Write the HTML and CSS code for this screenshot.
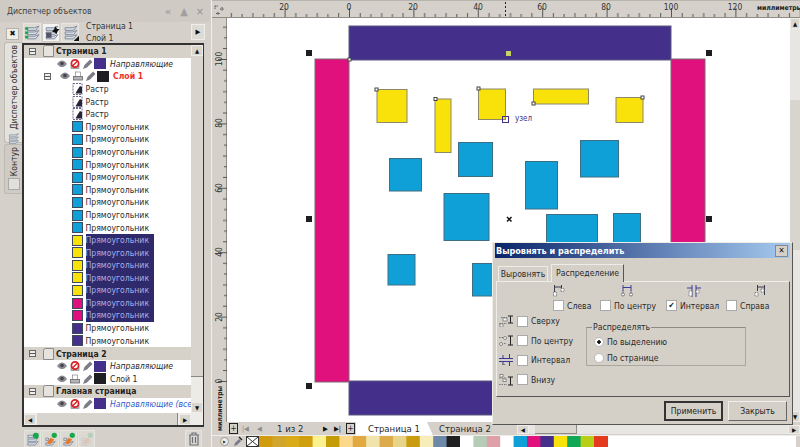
FILE: index.html
```html
<!DOCTYPE html>
<html lang="ru">
  <head>
    <meta charset="UTF-8" />
    <meta name="viewport" content="width=device-width, initial-scale=1.0" />
    <title>Диспетчер объектов</title>
    <link rel="stylesheet" href="styles.css">
  </head>
  <body>
    <!-- shared icons -->
    <svg class="defs" width="0" height="0">
      <symbol id="i-eye" viewBox="0 0 10 8"><path d="M0 4C2 1 3.500 .5 5 .5S8 1 10 4C8 6.500 6.500 7 5 7S2 6.500 0 4Z" fill="#8a8a92"/><circle cx="5" cy="3.500" r="1.800" fill="#44444c"/></symbol>
      <symbol id="i-noprint" viewBox="0 0 10 10"><rect x="1" y="6" width="8" height="3.500" fill="#bbb" stroke="#777" stroke-width=".6"/><circle cx="5" cy="4.500" r="3.600" fill="#fff" stroke="#d8232a" stroke-width="1.800"/><path d="M2.500 7L7.500 2" stroke="#d8232a" stroke-width="1.500"/></symbol>
      <symbol id="i-print" viewBox="0 0 10 10"><rect x="2.500" y="1" width="5" height="5" fill="#fff" stroke="#888" stroke-width=".7"/><rect x=".5" y="5.500" width="9" height="3.500" fill="#b4b4bc" stroke="#666" stroke-width=".8"/></symbol>
      <symbol id="i-pencil" viewBox="0 0 10 10"><path d="M0 10L1.500 6 7 .5 9.500 3 4 8.500Z" fill="#7c7c86"/></symbol>
      <symbol id="i-page" viewBox="0 0 12 12"><path d="M1.500 2.500Q1.500 .5 3.500 .5H11.500V11.500H1.500Z" fill="#e6e3de" stroke="#8a8a8a"/></symbol>
      <symbol id="i-bitmap" viewBox="0 0 11 12"><rect x="1" y=".5" width="9" height="11" fill="#fff" stroke="#6a6a8a" stroke-dasharray="2 1"/><path d="M3.500 10.500L6 6 8 3 10 4V10.500Z" fill="#24243a"/></symbol>
      <symbol id="i-stack" viewBox="0 0 16 16"><path d="M3 3.500H10L14 2 11 6H3ZM3 7.500H10L14 6 11 10H3ZM3 11.500H10L14 10 11 14H3Z" fill="#d6dce4" stroke="#66748c" stroke-width=".7"/></symbol>
      <symbol id="i-stack-green" viewBox="0 0 16 16"><use href="#i-stack"/><rect x="1" y="3" width="3" height="2.500" fill="#1fa84a"/><rect x="1" y="7" width="3" height="2.500" fill="#1fa84a"/><rect x="1" y="11" width="3" height="2.500" fill="#1fa84a"/></symbol>
      <symbol id="i-stack-dot" viewBox="0 0 16 16"><use href="#i-stack"/><path d="M11.500 2L13 4.500 15.500 5 13.500 7 13 9.500 11 8 8.500 7 10.500 5Z" fill="#111"/><rect x="3" y="8" width="5" height="5" fill="#556" /></symbol>
      <symbol id="i-stack-corner" viewBox="0 0 16 16"><use href="#i-stack"/><path d="M16 11V16H11Z" fill="#111"/></symbol>
      <symbol id="i-new-green" viewBox="0 0 16 16"><use href="#i-stack"/><circle cx="11.500" cy="4" r="3.200" fill="#17a84b"/></symbol>
      <symbol id="i-new-mix" viewBox="0 0 16 16"><path d="M3 11.500H9L13 10 10 14H3ZM3 6.500H6V9H3Z" fill="#d6dce4" stroke="#66748c" stroke-width=".7"/><circle cx="12" cy="3.500" r="2.800" fill="#17a84b"/><path d="M4 12L8 6 12 8 8 13Z" fill="#e8792a"/></symbol>
      <symbol id="i-dist-a" viewBox="0 0 14 12"><path d="M1.500 0V7M8.500 0V7M2 2H8" stroke="#3a3a50" fill="none"/><rect x=".5" y="7" width="3" height="4" fill="#fff" stroke="#777" stroke-dasharray="1 .6"/><rect x="8" y="3.500" width="3" height="3" fill="#fff" stroke="#777" stroke-dasharray="1 .6"/></symbol>
      <symbol id="i-dist-b" viewBox="0 0 14 12"><path d="M3 0V6M11 0V6M3 2.500H11" stroke="#3a3a9a" fill="none"/><path d="M3 6V8M11 6V8" stroke="#777"/><circle cx="3" cy="9.500" r="1.500" fill="#fff" stroke="#777"/><circle cx="11" cy="9.500" r="1.500" fill="#fff" stroke="#777"/></symbol>
      <symbol id="i-dist-c" viewBox="0 0 14 12"><path d="M5 0V12M9 0V12M0 3H5M9 3H14" stroke="#3a3a9a" fill="none"/><rect x="2" y="6" width="3" height="5" fill="#fff" stroke="#777" stroke-dasharray="1 .6"/><rect x="9" y="5" width="3" height="3" fill="#fff" stroke="#777" stroke-dasharray="1 .6"/></symbol>
      <symbol id="i-dist-d" viewBox="0 0 14 12"><path d="M5.500 0V6M12.500 0V10M6 2H12" stroke="#3a3a50" fill="none"/><rect x="3" y="7.500" width="3" height="3.500" fill="#fff" stroke="#777" stroke-dasharray="1 .6"/><rect x="9" y="4" width="3" height="3" fill="#fff" stroke="#777" stroke-dasharray="1 .6"/></symbol>
      <symbol id="i-vdist-a" viewBox="0 0 14 12"><path d="M2 2.500H8M0 8.500H8" stroke="#777" stroke-dasharray="1.500 1" fill="none"/><rect x="4" y="3" width="4" height="3" fill="#fff" stroke="#888"/><rect x="1" y="9" width="3" height="3" fill="#fff" stroke="#888"/><path d="M9 1H14M11.500 1V8M9 8H14" stroke="#222" fill="none"/></symbol>
      <symbol id="i-vdist-b" viewBox="0 0 14 12"><path d="M0 2.500H7M0 8.500H7" stroke="#777" stroke-dasharray="1.500 1" fill="none"/><circle cx="6" cy="3" r="1.500" fill="#fff" stroke="#888"/><circle cx="2" cy="9" r="1.500" fill="#fff" stroke="#888"/><path d="M9 1H14M11.500 1V10M9 10H14" stroke="#222" fill="none"/></symbol>
      <symbol id="i-vdist-c" viewBox="0 0 14 12"><path d="M0 4.500H14M0 7.500H14" stroke="#3a3a9a" fill="none"/><path d="M10.500 0V4M10.500 8V12M4 1V4M4 8V11" stroke="#3a3a9a"/><path d="M3 10.500H6" stroke="#777"/></symbol>
      <symbol id="i-vdist-d" viewBox="0 0 14 12"><rect x="1" y=".5" width="3" height="2.500" fill="#fff" stroke="#888"/><rect x="4" y="5" width="3" height="2.500" fill="#fff" stroke="#888"/><path d="M0 4H7M0 10.500H8" stroke="#777" stroke-dasharray="1.500 1" fill="none"/><path d="M9 3H14M11.500 3V11M9 11H14" stroke="#222" fill="none"/></symbol>
    </svg>

    <aside class="docker">
      <header class="docker-title">
        <span class="docker-name">Диспетчер объектов</span>
        <span class="docker-btns"><b>«</b><b>▲</b><b>×</b></span>
      </header>
      <div class="docker-body">
        <nav class="side-tabs">
          <span class="side-close">✖</span>
          <div class="side-tab side-tab-on">
            <span class="side-text">Диспетчер объектов</span>
            <svg class="side-icon" width="13" height="13"><use href="#i-stack"/></svg>
          </div>
          <div class="side-tab">
            <span class="side-text">Контур</span>
            <span class="side-mini"></span>
          </div>
        </nav>
        <div class="docker-main">
          <div class="tools">
            <span class="tool"><svg width="17" height="17"><use href="#i-stack-green"/></svg></span>
            <span class="tool tool-on"><svg width="17" height="17"><use href="#i-stack-dot"/></svg></span>
            <span class="tool"><svg width="17" height="17"><use href="#i-stack-corner"/></svg></span>
            <div class="tools-text">Страница 1<br>Слой 1</div>
            <span class="tool-arrow">▶</span>
          </div>
          <div class="tree">
            <div class="tree-top">
              <div class="tree-rows">
                <div class="row row-page"><i class="box"></i><svg class="pg" width="12" height="12"><use href="#i-page"/></svg>Страница 1</div>
                <div class="row row-layer"><svg width="10" height="8"><use href="#i-eye"/></svg><svg width="10" height="10"><use href="#i-noprint"/></svg><svg width="10" height="10"><use href="#i-pencil"/></svg><i class="lay c-purple"></i><em>Направляющие</em></div>
                <div class="row row-layer row-active"><i class="box"></i><svg width="10" height="8"><use href="#i-eye"/></svg><svg width="10" height="10"><use href="#i-print"/></svg><svg width="10" height="10"><use href="#i-pencil"/></svg><i class="lay c-black"></i><strong>Слой 1</strong></div>
                <div class="row row-obj"><svg class="bmp" width="11" height="12"><use href="#i-bitmap"/></svg><span>Растр</span></div>
                <div class="row row-obj"><svg class="bmp" width="11" height="12"><use href="#i-bitmap"/></svg><span>Растр</span></div>
                <div class="row row-obj"><svg class="bmp" width="11" height="12"><use href="#i-bitmap"/></svg><span>Растр</span></div>
                <div class="row row-obj"><i class="sw c-blue"></i><span>Прямоугольник</span></div>
                <div class="row row-obj"><i class="sw c-blue"></i><span>Прямоугольник</span></div>
                <div class="row row-obj"><i class="sw c-blue"></i><span>Прямоугольник</span></div>
                <div class="row row-obj"><i class="sw c-blue"></i><span>Прямоугольник</span></div>
                <div class="row row-obj"><i class="sw c-blue"></i><span>Прямоугольник</span></div>
                <div class="row row-obj"><i class="sw c-blue"></i><span>Прямоугольник</span></div>
                <div class="row row-obj"><i class="sw c-blue"></i><span>Прямоугольник</span></div>
                <div class="row row-obj"><i class="sw c-blue"></i><span>Прямоугольник</span></div>
                <div class="row row-obj"><i class="sw c-blue"></i><span>Прямоугольник</span></div>
                <div class="row row-obj row-sel"><i class="sw c-yellow"></i><span>Прямоугольник</span></div>
                <div class="row row-obj row-sel"><i class="sw c-yellow"></i><span>Прямоугольник</span></div>
                <div class="row row-obj row-sel"><i class="sw c-yellow"></i><span>Прямоугольник</span></div>
                <div class="row row-obj row-sel"><i class="sw c-yellow"></i><span>Прямоугольник</span></div>
                <div class="row row-obj row-sel"><i class="sw c-yellow"></i><span>Прямоугольник</span></div>
                <div class="row row-obj row-sel"><i class="sw c-pink"></i><span>Прямоугольник</span></div>
                <div class="row row-obj row-sel"><i class="sw c-pink"></i><span>Прямоугольник</span></div>
                <div class="row row-obj"><i class="sw c-purple"></i><span>Прямоугольник</span></div>
                <div class="row row-obj"><i class="sw c-purple"></i><span>Прямоугольник</span></div>
                <div class="row row-page"><i class="box"></i><svg class="pg" width="12" height="12"><use href="#i-page"/></svg>Страница 2</div>
                <div class="row row-layer"><svg width="10" height="8"><use href="#i-eye"/></svg><svg width="10" height="10"><use href="#i-noprint"/></svg><svg width="10" height="10"><use href="#i-pencil"/></svg><i class="lay c-purple"></i><em>Направляющие</em></div>
                <div class="row row-layer"><svg width="10" height="8"><use href="#i-eye"/></svg><svg width="10" height="10"><use href="#i-print"/></svg><svg width="10" height="10"><use href="#i-pencil"/></svg><i class="lay c-black"></i><span>Слой 1</span></div>
                <div class="row row-page"><i class="box"></i><svg class="pg" width="12" height="12"><use href="#i-page"/></svg>Главная страница</div>
                <div class="row row-layer row-master"><svg width="10" height="8"><use href="#i-eye"/></svg><svg width="10" height="10"><use href="#i-noprint"/></svg><svg width="10" height="10"><use href="#i-pencil"/></svg><i class="lay c-purple"></i><em>Направляющие (все</em></div>
              </div>
              <div class="vscroll">
                <span class="sbtn">▲</span>
                <span class="vthumb"></span>
                <span class="vtrack"></span>
                <span class="sbtn">▼</span>
              </div>
            </div>
            <div class="hscroll">
              <span class="sbtn">◀</span>
              <span class="hthumb"></span>
              <span class="sbtn">▶</span>
            </div>
          </div>
          <div class="docker-foot">
            <span class="foot-btn"><svg width="15" height="15"><use href="#i-new-green"/></svg></span>
            <span class="foot-btn"><svg width="15" height="15"><use href="#i-new-mix"/></svg></span>
            <span class="foot-btn"><svg width="15" height="15"><use href="#i-new-mix"/></svg></span>
            <span class="foot-btn foot-off"><svg width="15" height="15"><use href="#i-new-mix"/></svg></span>
            <span class="foot-btn foot-trash"><svg width="12" height="14" viewBox="0 0 12 14"><path d="M1 3H11M4 3V1H8V3M2 3.500V13H10V3.500M4.500 5V11M7.500 5V11" fill="none" stroke="#6f6f78" stroke-width="1.200"/></svg></span>
          </div>
        </div>
      </div>
    </aside>

    <main class="workspace">
      <div class="ruler-top">
        <span class="corner"><svg width="11" height="11" viewBox="0 0 11 11"><path d="M1 1H4M1 1V4M6 4H10M8 2V6M4 7V10M2 8.500H6" stroke="#555" fill="none" stroke-dasharray="1.500 .7"/></svg></span>
        <svg class="ruler-h" width="573" height="17" viewBox="227 0 573 17">
          <defs>
            <pattern id="tick-h" x="349" y="0" width="64.4" height="17" patternUnits="userSpaceOnUse">
              <path d="M.5 8V17M11.200 13V17M21.900 14V17M32.700 13V17M43.400 14V17M54.100 13V17" stroke="#555" fill="none"/>
            </pattern>
          </defs>
          <rect x="227" width="573" height="17" fill="url(#tick-h)"/>
          <path d="M505.500 2V17" stroke="#222" stroke-dasharray="2 2"/>
          <g class="ruler-num" text-anchor="middle">
            <text x="284" y="10">20</text><text x="349" y="10">0</text><text x="413" y="10">20</text><text x="478" y="10">40</text><text x="542" y="10">60</text><text x="606" y="10">80</text><text x="671" y="10">100</text><text x="735" y="10">120</text>
          </g>
          <text class="ruler-unit" x="757" y="10">миллиметры</text>
        </svg>
      </div>
      <div class="mid">
        <div class="ruler-left">
          <svg width="15" height="415" viewBox="212 18 15 415">
            <defs>
              <pattern id="tick-v" x="212" y="59" width="15" height="64.4" patternUnits="userSpaceOnUse">
                <path d="M6 .5H15M11 11.200H15M12 21.900H15M11 32.700H15M12 43.400H15M11 54.100H15" stroke="#555" fill="none"/>
              </pattern>
            </defs>
            <rect x="212" y="18" width="15" height="368" fill="url(#tick-v)"/>
            <g class="ruler-num" text-anchor="middle">
              <text transform="translate(222 59) rotate(-90)">100</text>
              <text transform="translate(222 123) rotate(-90)">80</text>
              <text transform="translate(222 188) rotate(-90)">60</text>
              <text transform="translate(222 252) rotate(-90)">40</text>
              <text transform="translate(222 317) rotate(-90)">20</text>
              <text transform="translate(222 381) rotate(-90)">0</text>
            </g>
            <text class="ruler-unit" transform="translate(222 431) rotate(-90)">миллиметры</text>
          </svg>
        </div>
        <svg class="canvas" width="563" height="404" viewBox="227 18 563 404">
          <g class="shapes-purple"><rect x="349" y="26" width="322" height="34"/><rect x="349" y="381" width="322" height="34"/></g>
          <g class="shapes-pink"><rect x="315" y="59" width="34" height="323"/><rect x="671" y="59" width="34" height="323"/></g>
          <g class="shapes-yellow">
            <rect x="377" y="89.500" width="30" height="33"/>
            <rect x="435" y="99" width="16" height="53.500"/>
            <rect x="478.500" y="89" width="27" height="30.500"/>
            <rect x="533.500" y="89" width="55" height="15"/>
            <rect x="616" y="97.500" width="27" height="25"/>
          </g>
          <g class="shapes-blue">
            <rect x="389.500" y="158.500" width="32" height="32.500"/>
            <rect x="458.500" y="142.500" width="34" height="34"/>
            <rect x="444" y="193.500" width="45" height="47"/>
            <rect x="388" y="254.500" width="27" height="30.500"/>
            <rect x="472.500" y="263.500" width="20" height="32.500"/>
            <rect x="525.500" y="161.500" width="32" height="47.500"/>
            <rect x="580.500" y="140.500" width="38" height="36.500"/>
            <rect x="546.500" y="214.500" width="51" height="29"/>
            <rect x="613.500" y="213.500" width="27" height="30"/>
          </g>
          <g class="handles">
            <rect x="306" y="50" width="6" height="6"/><rect x="706" y="50" width="6" height="6"/>
            <rect x="306" y="216" width="6" height="6"/><rect x="706" y="216" width="6" height="6"/>
            <rect x="306" y="383" width="6" height="6"/>
          </g>
          <rect class="handle-mid" x="506" y="51" width="5" height="5"/>
          <path class="center-x" d="M507 217L511.500 221.500M511.500 217L507 221.500"/>
          <g class="nodes">
            <rect x="375" y="88" width="3" height="3"/><rect x="434" y="97.500" width="3" height="3"/>
            <rect x="477" y="87" width="3" height="3"/><rect x="532" y="102" width="3" height="3"/>
            <rect x="641" y="96" width="3" height="3"/><rect x="348" y="58" width="3" height="3"/>
          </g>
          <rect class="snap" x="502.500" y="116.500" width="6" height="6"/>
          <text class="snap-text" x="515" y="121">узел</text>
        </svg>
        <div class="canvas-scroll">
          <span class="sbtn">▲</span>
          <span class="cs-track"></span>
          <span class="cs-thumb"></span>
          <span class="cs-rest"></span>
          <span class="sbtn">▼</span>
        </div>
      </div>
      <div class="pagebar">
        <span class="pg-add">+</span>
        <span class="pg-nav pg-first pg-off">|◀</span>
        <span class="pg-nav pg-prev pg-off">◀</span>
        <span class="pg-count">1 из 2</span>
        <span class="pg-nav pg-next">▶</span>
        <span class="pg-nav pg-last">▶|</span>
        <span class="pg-add">+</span>
        <span class="pg-tab pg-tab-on">Страница 1</span>
        <span class="pg-tab">Страница 2</span>
        <div class="pg-scroll">
          <span class="sbtn">◀</span>
          <span class="pg-thumb"></span>
          <span class="pg-track"></span>
          <span class="sbtn">▶</span>
        </div>
      </div>
      <div class="palette">
        <span class="pal-arrow">▶</span>
        <svg class="pal-drop" width="10" height="11" viewBox="0 0 10 11"><path d="M1 10L2 7 6 3 8 5 4 9Z" fill="#7a7a8a"/><path d="M5.500 1.500L6.500 .5 9.500 3.500 8.500 4.500Z" fill="#222"/></svg>
        <svg class="pal-none" width="13" height="11"><rect x=".5" y=".5" width="12" height="10" fill="#fff" stroke="#333"/><path d="M1 1L12 10M12 1L1 10" stroke="#333"/></svg>
        <svg class="pal-colors" width="349" height="11" viewBox="0 0 349 11">
          <rect x="0" width="14" height="11" fill="#d09c0e"/><rect x="13.400" width="14" height="11" fill="#d2a62c"/><rect x="26.800" width="14" height="11" fill="#d9ab18"/><rect x="40.200" width="14" height="11" fill="#cf9f0e"/><rect x="53.600" width="14" height="11" fill="#fdf08e"/><rect x="67" width="14" height="11" fill="#c49c08"/><rect x="80.400" width="14" height="11" fill="#fbd88a"/><rect x="93.800" width="14" height="11" fill="#e0aa40"/><rect x="107.200" width="14" height="11" fill="#f0e3ac"/><rect x="120.600" width="14" height="11" fill="#dcac4c"/><rect x="134" width="14" height="11" fill="#e8d488"/><rect x="147.400" width="14" height="11" fill="#c99c10"/><rect x="160.800" width="14" height="11" fill="#f7edb8"/><rect x="174.200" width="14" height="11" fill="#6e88a8"/><rect x="187.600" width="14" height="11" fill="#1f1f22"/><rect x="201" width="14" height="11" fill="#fff"/><rect x="214.400" width="14" height="11" fill="#b4ccb8"/><rect x="227.800" width="14" height="11" fill="#dfa0a8"/><rect x="241.200" width="14" height="11" fill="#fff"/><rect x="254.600" width="14" height="11" fill="#10a0d8"/><rect x="268" width="14" height="11" fill="#e0107c"/><rect x="281.400" width="14" height="11" fill="#44308a"/><rect x="294.800" width="14" height="11" fill="#f9e20a"/><rect x="308.200" width="14" height="11" fill="#10a855"/><rect x="321.600" width="14" height="11" fill="#b8cf18"/><rect x="335" width="14" height="11" fill="#e63a20"/>
        </svg>
        <span class="pal-rest"></span>
      </div>
    </main>

    <section class="dialog">
      <header class="dlg-title">Выровнять и распределить<span class="dlg-close">✕</span></header>
      <div class="dlg-tabs">
        <span class="dlg-tab">Выровнять</span>
        <span class="dlg-tab dlg-tab-on">Распределение</span>
      </div>
      <div class="dlg-panel">
        <div class="h-opts">
          <div class="h-opt h-opt-1"><svg width="14" height="12"><use href="#i-dist-a"/></svg><label><i class="chk"></i>Слева</label></div>
          <div class="h-opt h-opt-2"><svg width="14" height="12"><use href="#i-dist-b"/></svg><label><i class="chk"></i>По центру</label></div>
          <div class="h-opt h-opt-3"><svg width="14" height="12"><use href="#i-dist-c"/></svg><label><i class="chk">✔</i>Интервал</label></div>
          <div class="h-opt h-opt-4"><svg width="14" height="12"><use href="#i-dist-d"/></svg><label><i class="chk"></i>Справа</label></div>
        </div>
        <div class="dlg-lower">
          <div class="v-opts">
            <label><svg width="14" height="12"><use href="#i-vdist-a"/></svg><i class="chk"></i>Сверху</label>
            <label><svg width="14" height="12"><use href="#i-vdist-b"/></svg><i class="chk"></i>По центру</label>
            <label><svg width="14" height="12"><use href="#i-vdist-c"/></svg><i class="chk"></i>Интервал</label>
            <label><svg width="14" height="12"><use href="#i-vdist-d"/></svg><i class="chk"></i>Внизу</label>
          </div>
          <fieldset class="dlg-group">
            <legend>Распределять</legend>
            <label><i class="radio radio-on"></i>По выделению</label>
            <label><i class="radio"></i>По странице</label>
          </fieldset>
        </div>
      </div>
      <div class="dlg-btns">
        <button class="dlg-btn dlg-btn-def" type="button">Применить</button>
        <button class="dlg-btn" type="button">Закрыть</button>
      </div>
    </section>
  </body>
</html>
```

FILE: styles.css
```css
* {
  box-sizing: border-box;
}
html, body {
  margin: 0;
  height: 100%;
}
body {
  width: 800px;
  height: 447px;
  overflow: hidden;
  position: relative;
  display: flex;
  background-color: #d5d1ca;
  font-family: "DejaVu Sans Condensed", "DejaVu Sans", sans-serif;
  font-size: 8.6px;
  color: #2a2a2a;
}
.defs {
  position: absolute;
}
svg {
  display: block;
  flex: none;
}
i {
  font-style: normal;
}

/* docker */
.docker {
  width: 212px;
  flex: none;
  display: flex;
  flex-direction: column;
  border-right: 1px solid #f0eeea;
  padding-right: 1px;
}
.docker-title {
  height: 22px;
  display: flex;
  align-items: center;
  justify-content: space-between;
  padding: 0 5px 0 7px;
  background-color: #cfcbc4;
  color: #3c3c3c;
}
.docker-btns {
  display: flex;
  gap: 6px;
  color: #a0a0a0;
}
.docker-btns b {
  width: 10px;
  text-align: center;
  font-size: 11px;
}
.docker-body {
  flex: 1;
  display: flex;
  min-height: 0;
}
.side-tabs {
  width: 22px;
  flex: none;
  padding: 6px 0 0 4px;
  display: flex;
  flex-direction: column;
}
.side-close {
  width: 13px;
  height: 12px;
  margin: 0 0 2px 2px;
  background-color: #efedea;
  border: 1px solid #b5b2aa;
  font-size: 8px;
  line-height: 10px;
  text-align: center;
  color: #111;
}
.side-tab {
  display: flex;
  flex-direction: column;
  align-items: center;
  gap: 2px;
  padding: 2px 0 3px;
  border: 1px solid #bdbab2;
  border-right: 0;
  border-radius: 3px 0 0 3px;
  background-color: #d0ccc5;
  width: 18px;
}
.side-tab-on {
  background-color: #e4e2dc;
  height: 101px;
  margin-bottom: 1px;
}
.side-text {
  writing-mode: vertical-rl;
  transform: rotate(180deg);
  line-height: 14px;
  white-space: nowrap;
}
.side-mini {
  width: 12px;
  height: 12px;
  background-color: #e0dfdc;
  border: 1px solid #aaa;
}
.docker-main {
  flex: 1;
  min-width: 0;
  display: flex;
  flex-direction: column;
  padding-right: 6px;
}
.tools {
  height: 20px;
  display: flex;
  align-items: center;
  gap: 1px;
  margin-right: -1px;
  padding-left: 1px;
}
.tool {
  width: 18px;
  height: 19px;
  display: flex;
  align-items: center;
  justify-content: center;
  background-color: #dedbd5;
  border: 1px solid #e8e6e2;
}
.tool-on {
  background-color: #f4f3f0;
  border-color: #cfcdc8;
}
.tools-text {
  flex: 1;
  padding-left: 6px;
  line-height: 12px;
  color: #333;
}
.tool-arrow {
  width: 14px;
  height: 16px;
  background-color: #dedbd5;
  border: 1px solid #efedea;
  font-size: 7px;
  line-height: 14px;
  text-align: center;
  color: #111;
}
.tree {
  height: 384px;
  margin-top: 1px;
  border: 1px solid #333;
  border-width: 2px 1px 2px 2px;
  display: flex;
  flex-direction: column;
  background-color: #fff;
  flex: none;
}
.tree-top {
  flex: 1;
  min-height: 0;
  display: flex;
}
.tree-rows {
  flex: 1;
  min-width: 0;
  overflow: hidden;
}
.row {
  height: 12.6px;
  display: flex;
  align-items: center;
  white-space: nowrap;
  line-height: 12px;
}
.box {
  width: 7px;
  height: 7px;
  flex: none;
  border: 1px solid #666;
  background: linear-gradient(#555, #555) center / 5px 1px no-repeat #eee;
}
.row-page {
  background-color: #d6d2ca;
  padding-left: 5px;
  font-weight: bold;
  color: #222;
}
.pg {
  margin: 0 2px 0 6px;
}
.row-layer {
  padding-left: 33px;
  gap: 3px;
}
.row-layer em,
.row-layer strong,
.row-layer span {
  margin-left: 1px;
}
.row-active {
  padding-left: 20px;
}
.row-active .box {
  margin-right: 6px;
}
.row-active strong {
  color: #f0302a;
}
.row-master em {
  color: #2f5cc8;
}
.lay {
  width: 12px;
  height: 11px;
  flex: none;
  margin-left: -2px;
}
.c-purple { background-color: #44308a; }
.c-black { background-color: #1e1e22; }
.c-blue { background-color: #10a0d8; }
.c-yellow { background-color: #f9e20a; }
.c-pink { background-color: #e0107c; }
.row-obj {
  padding-left: 48px;
}
.sw {
  width: 11px;
  height: 11px;
  flex: none;
  border: 1px solid #3d4a5c;
}
.row-obj span {
  margin-left: 2.500px;
}
.row-sel span {
  width: 68px;
  background-color: #2e2a6b;
  color: #a9b0e6;
  line-height: 12.6px;
}
.vscroll {
  width: 12px;
  flex: none;
  display: flex;
  flex-direction: column;
  background-color: #eeece8;
}
.sbtn {
  display: block;
  flex: none;
  width: 12px;
  height: 11px;
  background-color: #d9d6d0;
  border: 1px solid #efedea;
  font-size: 6px;
  line-height: 9px;
  text-align: center;
  color: #111;
}
.vthumb {
  height: 321px;
  background-color: #d8d5cf;
  border-bottom: 1px solid #888;
}
.vtrack {
  flex: 1;
  background-color: #ecebe6;
}
.hscroll {
  height: 12px;
  flex: none;
  display: flex;
  align-items: center;
  gap: 1px;
  background-color: #eeece8;
  padding-right: 12px;
}
.hthumb {
  flex: 1;
  height: 12px;
  background-color: #d8d5cf;
  border-right: 1px solid #888;
}
.docker-foot {
  flex: 1;
  display: flex;
  gap: 1px;
  padding-top: 3px;
  padding-left: 2px;
}
.foot-btn {
  width: 17px;
  height: 18px;
  display: flex;
  align-items: center;
  justify-content: center;
  background-color: #dcd9d3;
  border: 1px solid #e6e4df;
}
.foot-off svg {
  opacity: 0.2;
}
.foot-trash {
  margin-left: auto;
  margin-right: 2px;
}

/* workspace */
.workspace {
  flex: 1;
  min-width: 0;
  display: flex;
  flex-direction: column;
}
.ruler-top {
  height: 18px;
  display: flex;
  border-top: 1px solid #b8b5ae;
  border-bottom: 1px solid #8f8c86;
  overflow: hidden;
}
.corner {
  width: 15px;
  flex: none;
  padding: 4px 0 0 2px;
}
.ruler-h {
  margin-top: -1px;
}
.ruler-num {
  font-family: "DejaVu Sans Condensed", "DejaVu Sans", sans-serif;
  font-size: 8.5px;
  fill: #333;
}
.ruler-unit {
  font-family: "DejaVu Sans Condensed", "DejaVu Sans", sans-serif;
  font-size: 6.8px;
  font-weight: bold;
  fill: #222;
}
.mid {
  height: 404px;
  display: flex;
}
.ruler-left {
  width: 15px;
  flex: none;
  border-right: 1px solid #8f8c86;
  position: relative;
  z-index: 1;
}
.ruler-left svg {
  overflow: visible;
}
.canvas {
  background-color: #fff;
}
.shapes-purple rect { fill: #44308a; stroke: #5c5a7e; }
.shapes-pink rect { fill: #e0107c; stroke: #7a6a74; }
.shapes-yellow rect { fill: #f9e20a; stroke: #8c8868; }
.shapes-blue rect { fill: #10a0d8; stroke: #3d6e86; }
.handles rect { fill: #1e1e22; }
.handle-mid { fill: #c6d263; }
.center-x {
  stroke: #111;
  stroke-width: 1.500;
  fill: none;
}
.nodes rect {
  fill: #fff;
  stroke: #444;
}
.snap {
  fill: none;
  stroke: #44308a;
}
.snap-text {
  font-family: "DejaVu Sans Condensed", "DejaVu Sans", sans-serif;
  font-size: 8px;
  fill: #44308a;
}
.canvas-scroll {
  width: 10px;
  flex: none;
  display: flex;
  flex-direction: column;
  background-color: #e8e6e2;
}
.canvas-scroll .sbtn {
  width: 10px;
}
.cs-track {
  height: 71px;
}
.cs-thumb {
  height: 150px;
  background-color: #d8d5cf;
}
.cs-rest {
  flex: 1;
}
.pagebar {
  height: 14px;
  display: flex;
  align-items: center;
  padding-left: 17px;
  font-size: 9.5px;
  background-color: #d5d1ca;
  border-bottom: 1px solid #efedea;
}
.pg-add {
  width: 9px;
  height: 11px;
  flex: none;
  border: 1px solid #222;
  font-size: 8px;
  line-height: 9px;
  text-align: center;
}
.pg-nav {
  flex: none;
  width: 9px;
  font-size: 7px;
  color: #111;
  white-space: nowrap;
}
.pg-first { margin-left: 4px; }
.pg-prev { margin-left: 6px; }
.pg-next { margin-left: 0; }
.pg-last { margin: 0 3px 0 2px; }
.pg-off {
  color: #8c8c8c;
}
.pg-count {
  flex: none;
  width: 57px;
  padding-left: 11px;
}
.pg-tab {
  flex: none;
  padding: 0 6px;
  line-height: 14px;
}
.pg-tab-on {
  background-color: #fff;
  margin-left: 1px;
  padding: 0 13px 0 12px;
  clip-path: polygon(0 0, 92% 0, 100% 100%, 0 100%);
}
.pg-scroll {
  flex: 1;
  height: 9px;
  align-self: flex-end;
  margin: 0 0 1px 20px;
  display: flex;
  background-color: #e8e6e2;
}
.pg-scroll .sbtn {
  width: 12px;
  height: 9px;
  line-height: 7px;
}
.pg-thumb {
  width: 42px;
  margin-left: 6px;
  background-color: #d8d5cf;
  border: 1px solid #8f8c86;
  border-width: 0 1px 1px 0;
}
.pg-track {
  flex: 1;
}
.palette {
  flex: 1;
  display: flex;
  align-items: flex-end;
  padding-left: 8px;
  background-color: #d5d1ca;
}
.pal-arrow {
  width: 9px;
  height: 9px;
  border-radius: 50%;
  background-color: #eeece8;
  border: 1px solid #999;
  font-size: 4px;
  line-height: 7px;
  text-align: center;
  margin: 0 4px 1px 0;
}
.pal-drop {
  margin-right: 3px;
}
.pal-rest {
  flex: 1;
  height: 11px;
  background-color: #fff;
  margin-right: 4px;
}

/* dialog */
.dialog {
  position: absolute;
  left: 492px;
  top: 242px;
  width: 301px;
  height: 183px;
  background-color: #d4d0c8;
  border: 1px solid;
  border-color: #eeece6 #555 #555 #eeece6;
  padding: 0 2px;
  display: flex;
  flex-direction: column;
}
.dlg-title {
  height: 15px;
  padding-left: 1px;
  display: flex;
  align-items: center;
  justify-content: space-between;
  background: linear-gradient(90deg, #0a246a, #a6caf0);
  color: #fff;
  font-size: 9px;
  font-weight: bold;
}
.dlg-close {
  width: 13px;
  height: 12px;
  margin-right: 2px;
  background-color: #d4d0c8;
  border: 1px solid #888;
  font-size: 8px;
  line-height: 10px;
  text-align: center;
  color: #111;
  font-weight: normal;
}
.dlg-tabs {
  display: flex;
  align-items: flex-end;
  height: 23px;
  padding-left: 3px;
}
.dlg-tab {
  width: 50px;
  height: 15px;
  padding-top: 1px;
  border: 1px solid #eeece6;
  border-bottom: 0;
  line-height: 12px;
  text-align: center;
}
.dlg-tab-on {
  width: 73px;
  height: 18px;
  padding-top: 2px;
  margin-left: 3px;
  border-right: 1px solid #555;
  margin-bottom: -1px;
  position: relative;
  background-color: #d4d0c8;
}
.dlg-panel {
  margin: 0 0 0 1px;
  height: 116px;
  border: 1px solid;
  border-color: #eeece6 #555 #555 #eeece6;
}
.h-opts {
  display: grid;
  grid-template-columns: 47px 66px 60px auto;
  height: 29px;
  padding: 3px 0 0 56px;
}
.h-opt {
  display: flex;
  flex-direction: column;
  gap: 3px;
}
.h-opt label,
.v-opts label,
.dlg-group label {
  display: flex;
  align-items: center;
  white-space: nowrap;
}
.h-opt-1 svg { margin-left: 0; }
.h-opt-2 svg { margin-left: 20px; }
.h-opt-3 svg { margin-left: 21px; }
.h-opt-4 svg { margin-left: 26px; }
.chk {
  width: 11px;
  height: 11px;
  flex: none;
  margin-right: 3px;
  background-color: #fff;
  border: 1px solid #aaa;
  font-size: 8px;
  line-height: 9px;
  text-align: center;
  color: #111;
}
.dlg-lower {
  display: flex;
  padding: 4px 0 0 2px;
}
.v-opts {
  width: 87px;
  flex: none;
  display: flex;
  flex-direction: column;
  gap: 7.500px;
}
.v-opts label {
  height: 12px;
}
.v-opts svg {
  margin-right: 4px;
}
.dlg-group {
  width: 160px;
  height: 44px;
  margin: 7px 0 0 0;
  padding: 3px 0 0 7px;
  border: 1px solid #aaa6a0;
  border-top-color: #8e8a84;
  display: flex;
  flex-direction: column;
  gap: 4px;
}
.dlg-group legend {
  padding: 0 1px;
  margin-left: -2px;
  line-height: 11px;
}
.dlg-group label {
  height: 12px;
}
.radio {
  width: 10px;
  height: 10px;
  flex: none;
  margin-right: 3px;
  border-radius: 50%;
  background-color: #fff;
  border: 1px solid #bbb;
}
.radio-on {
  background: radial-gradient(circle, #111 0 1.500px, #fff 2px);
}
.dlg-btns {
  display: flex;
  justify-content: flex-end;
  gap: 5px;
  padding: 4px 3px 0 0;
}
.dlg-btn {
  width: 59px;
  height: 20px;
  padding: 0;
  background-color: #d4d0c8;
  border: 1px solid;
  border-color: #f2f0ec #666 #666 #f2f0ec;
  font-family: inherit;
  font-size: 8.6px;
  color: #222;
}
.dlg-btn-def {
  border: 2px solid #333;
}
```
